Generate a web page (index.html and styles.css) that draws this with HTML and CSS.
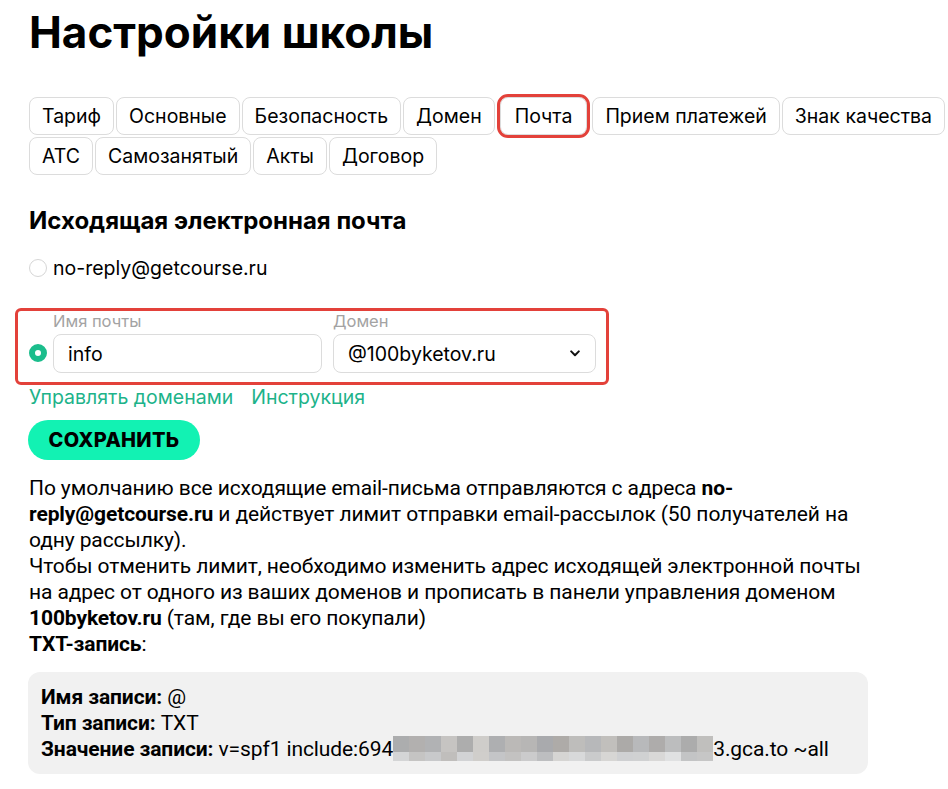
FILE: index.html
```html
<!DOCTYPE html>
<html lang="ru">
<head>
    <meta charset="UTF-8">
    <meta name="viewport" content="width=device-width, initial-scale=1.0">
    <title>Настройки школы</title>
    <link rel="stylesheet" href="styles.css">
</head>
<body>
    <h1>Настройки школы</h1>

    <div class="tabs">
        <a class="tab">Тариф</a>
        <a class="tab">Основные</a>
        <a class="tab">Безопасность</a>
        <a class="tab">Домен</a>
        <a class="tab marked">Почта</a>
        <a class="tab">Прием платежей</a>
        <a class="tab">Знак качества</a>
        <a class="tab">АТС</a>
        <a class="tab">Самозанятый</a>
        <a class="tab">Акты</a>
        <a class="tab">Договор</a>
    </div>

    <h2>Исходящая электронная почта</h2>

    <label class="radio-row">
        <span class="radio"></span>
        <span>no-reply@getcourse.ru</span>
    </label>

    <div class="custom-row">
        <span class="radio checked"></span>
        <div class="field name-field">
            <div class="field-label">Имя почты</div>
            <div class="input">info</div>
        </div>
        <div class="field domain-field">
            <div class="field-label">Домен</div>
            <div class="input select">
                <span>@100byketov.ru</span>
                <svg class="chevron" width="10" height="7" viewBox="0 0 10 7">
                    <path d="M1.2 1.4 5 5.2 8.8 1.4" fill="none" stroke="#111" stroke-width="2" stroke-linecap="round" stroke-linejoin="round"/>
                </svg>
            </div>
        </div>
    </div>

    <div class="links">
        <a href="#">Управлять доменами</a>
        <a href="#">Инструкция</a>
    </div>

    <button class="save-btn">Сохранить</button>

    <p class="note">
        По умолчанию все исходящие email-письма отправляются с адреса <b>no-reply@getcourse.ru</b> и действует лимит отправки email-рассылок (50 получателей на одну рассылку).<br>
        Чтобы отменить лимит, необходимо изменить адрес исходящей электронной почты на адрес от одного из ваших доменов и прописать в панели управления доменом <b>100byketov.ru</b> (там, где вы его покупали)<br>
        <b>TXT-запись</b>:
    </p>

    <div class="record">
        <div><b>Имя записи:</b> @</div>
        <div><b>Тип записи:</b> TXT</div>
        <div><b>Значение записи:</b> v=spf1 include:694<span class="blur"><span class="blur-top"></span><span class="blur-bottom"></span></span>3.gca.to ~all</div>
    </div>
</body>
</html>
```

FILE: styles.css
```css
body {
    margin: 0;
    padding: 0 0 0 29px;
    background: #fff;
    color: #000;
    font-family: Inter, "Noto Sans", sans-serif;
}
h1 {
    margin: 7px 0 0;
    font-size: 44px;
    line-height: 50px;
    font-weight: 700;
}
.tabs {
    display: flex;
    flex-wrap: wrap;
    gap: 2px;
    margin-top: 40px;
}
.tab {
    height: 38px;
    box-sizing: border-box;
    padding: 0 12px;
    display: flex;
    align-items: center;
    border: 1px solid #dcdcdc;
    border-radius: 8px;
    font-size: 19.5px;
    color: #000;
}
.tab.marked {
    outline: 3px solid #e3413a;
    padding: 0 14px;
    margin: 0 3px;
}
h2 {
    margin: 32px 0 0;
    font-size: 24px;
    line-height: 28px;
    font-weight: 700;
}
.radio-row {
    display: flex;
    align-items: center;
    gap: 6px;
    margin-top: 21px;
    font-size: 19.5px;
    line-height: 24px;
}
.radio {
    width: 18px;
    height: 18px;
    box-sizing: border-box;
    border: 1px solid #d6d6d6;
    border-radius: 50%;
    flex: none;
}
.radio.checked {
    border: 6px solid #1bbd8c;
    background: #fff;
}
.custom-row {
    position: relative;
    display: flex;
    align-items: flex-end;
    gap: 6px;
    margin-top: 32px;
}
.custom-row::before {
    content: "";
    position: absolute;
    left: -14px;
    top: -4px;
    width: 594px;
    height: 77px;
    box-sizing: border-box;
    border: 3px solid #e3413a;
    border-radius: 6px;
}
.custom-row .radio {
    margin-bottom: 11px;
}
.field-label {
    font-size: 16.5px;
    line-height: 18px;
    color: #a3a3a3;
    margin-bottom: 4px;
}
.input {
    height: 39px;
    box-sizing: border-box;
    border: 1px solid #dcdcdc;
    border-radius: 8px;
    padding: 0 14px;
    display: flex;
    align-items: center;
    font-size: 19.5px;
}
.name-field .input {
    width: 269px;
}
.domain-field {
    margin-left: 5px;
}
.select {
    width: 263px;
    justify-content: space-between;
    padding-right: 15px;
}
.links {
    display: flex;
    gap: 18px;
    margin-top: 12px;
    font-size: 19.5px;
    line-height: 24px;
}
.links a {
    color: #1db38a;
    text-decoration: none;
}
.save-btn {
    display: block;
    margin: 11px 0 0 -1px;
    width: 172px;
    height: 40px;
    border: none;
    border-radius: 20px;
    background: #12f2b3;
    color: #000;
    font-family: Inter, sans-serif;
    font-size: 20px;
    font-weight: 800;
    letter-spacing: 0.3px;
    text-transform: uppercase;
}
.note {
    margin: 15px 0 0;
    width: 840px;
    font-family: Roboto, sans-serif;
    font-size: 21px;
    line-height: 26px;
    letter-spacing: -0.1px;
}
.note b, .record b {
    font-weight: 700;
}
.record {
    margin: 15px 0 0 -1px;
    width: 840px;
    box-sizing: border-box;
    padding: 12px 13px;
    background: #f1f1f1;
    border-radius: 12px;
    font-family: Roboto, sans-serif;
    font-size: 21px;
    line-height: 26px;
    letter-spacing: -0.1px;
}
.blur {
    display: inline-flex;
    flex-direction: column;
    width: 320px;
    height: 25px;
    vertical-align: top;
}
.blur-top {
    height: 16px;
    background: linear-gradient(90deg,
        #acadae 0 16px, #b2b0af 16px 32px, #b1b2b4 32px 48px, #c6c4c2 48px 64px,
        #adadad 64px 80px, #cfcdca 80px 96px, #aeafb1 96px 112px, #bbb9b7 112px 128px,
        #b7b6b5 128px 144px, #a9aaad 144px 160px, #aeaba8 160px 176px, #bebdbb 176px 192px,
        #b7b8ba 192px 208px, #c1bfbc 208px 224px, #acaaa8 224px 240px, #b8b9bb 240px 256px,
        #aeacab 256px 272px, #bcbdbe 272px 288px, #acacac 288px 304px, #c0bfbd 304px 320px);
}
.blur-bottom {
    height: 9px;
    background: linear-gradient(90deg,
        #d4d5d6 0 16px, #c5c4c3 16px 32px, #c8c9cb 32px 48px, #c0bebc 48px 64px,
        #d2d3d5 64px 80px, #d0cecb 80px 96px, #c4c5c7 96px 112px, #c3c2c1 112px 128px,
        #cbcbcc 128px 144px, #bdbec0 144px 160px, #d6d5d3 160px 176px, #d8d9da 176px 192px,
        #cacbcc 192px 208px, #d7d6d4 208px 224px, #cfd0d2 224px 240px, #d0d1d2 240px 256px,
        #d9d8d7 256px 272px, #e0e1e2 272px 288px, #c3c4c5 288px 304px, #c6c6c6 304px 320px);
}
```
